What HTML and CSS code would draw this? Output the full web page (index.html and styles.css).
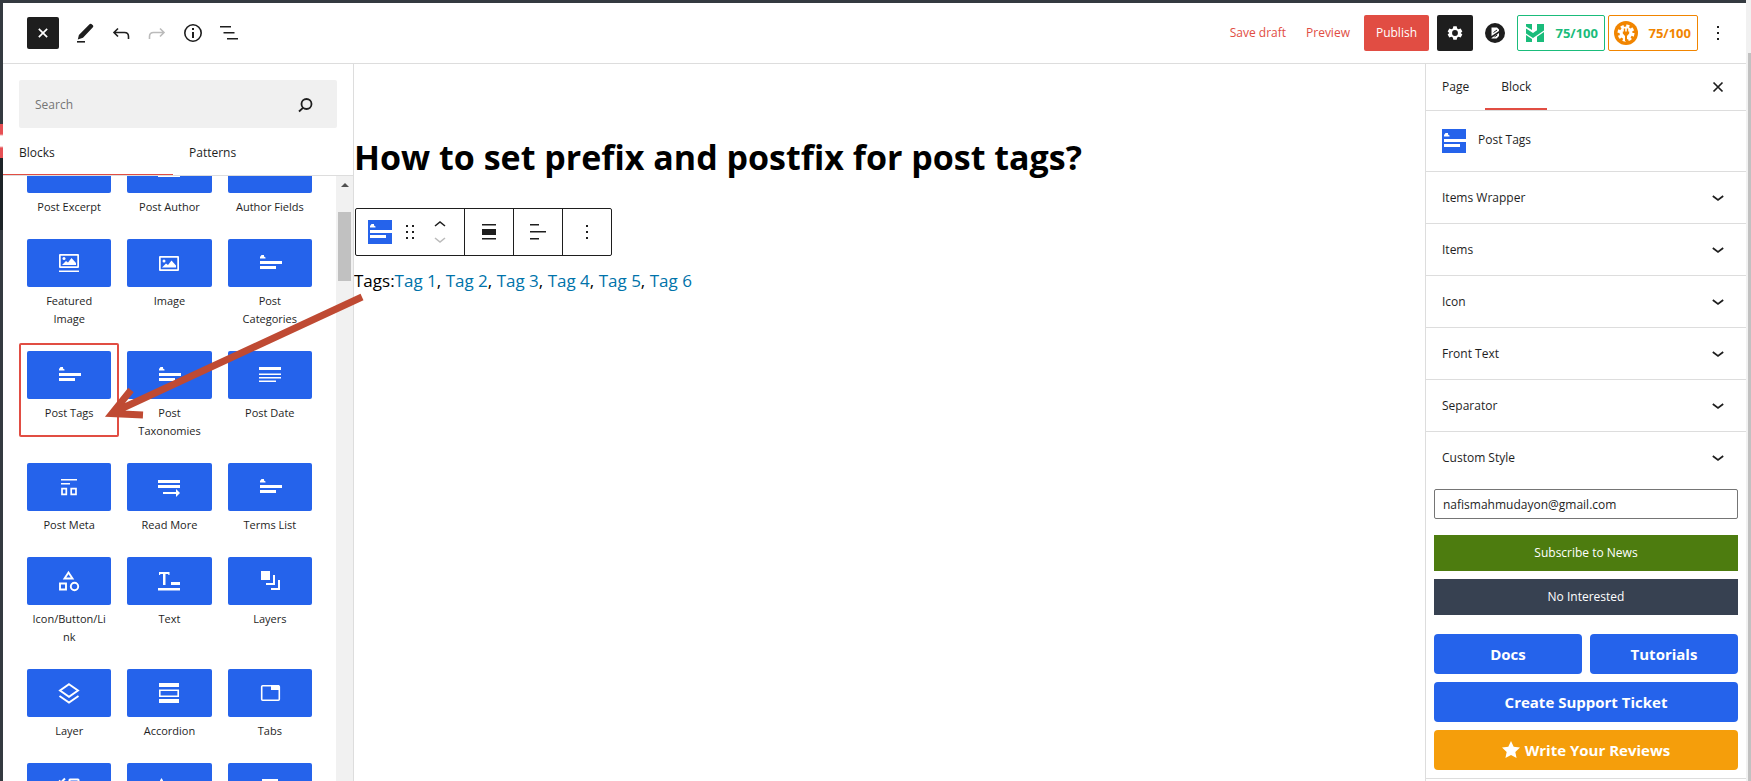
FILE: index.html
```
<!DOCTYPE html>
<html lang="en">
<head>
<meta charset="utf-8">
<title>Edit Page</title>
<link rel="stylesheet" href="styles.css">
</head>
<body>
<svg class="defs" aria-hidden="true">
  <symbol id="terms" viewBox="0 0 24 24"><path d="M2 7.500V6l1.500-2H6v1.500l1.500 1v1zM2 10h22v3H2zM2 15h16v3H2z"/></symbol>
  <symbol id="chev" viewBox="0 0 24 24"><path d="M6.800 10 12 14l5.200-4" fill="none" stroke="currentColor" stroke-width="1.700"/></symbol>
</svg>
<div class="frame">
  <div class="strip"></div>
  <div class="editor">
    <header class="topbar">
      <div class="tools">
        <button class="tool close-inserter" aria-label="Toggle block inserter"><svg viewBox="0 0 24 24"><path d="M7 7l10 10M17 7 7 17" fill="none" stroke="currentColor" stroke-width="2"/></svg></button>
        <button class="tool" aria-label="Tools"><svg viewBox="0 0 24 24"><path d="M16.500 3.200q.8-1 1.900-.2l1.500 1.300q.9.900 0 1.900L10 16.800 4.800 18.600 5.900 14z"/><path d="M4 20h8v1.600H4z"/></svg></button>
        <button class="tool" aria-label="Undo"><svg viewBox="0 0 24 24"><path d="M9 7.500 5 11.500l4 4M5 11.500h10.500q4 0 4 4v2.500" fill="none" stroke="currentColor" stroke-width="1.600"/></svg></button>
        <button class="tool" aria-label="Redo" disabled><svg viewBox="0 0 24 24"><path d="m15 7.500 4 4-4 4M19 11.500H8.500q-4 0-4 4v2.500" fill="none" stroke="currentColor" stroke-width="1.600"/></svg></button>
        <button class="tool" aria-label="Details"><svg viewBox="0 0 24 24"><circle cx="12" cy="12" r="8.200" fill="none" stroke="currentColor" stroke-width="1.600"/><path d="M11 7h2v2h-2zM11 11h2v6h-2z"/></svg></button>
        <button class="tool" aria-label="List view"><svg viewBox="0 0 24 24"><path d="M3 5h11v1.600H3zM6.500 11h11v1.600h-11zM10 17h11v1.600H10z"/></svg></button>
      </div>
      <div class="actions">
        <button class="link">Save draft</button>
        <button class="link">Preview</button>
        <button class="publish">Publish</button>
        <button class="settings" aria-label="Settings"><svg viewBox="0 0 24 24"><path fill-rule="evenodd" d="M10 4h4l.6 2.500 1.700 1 2.500-.8 2 3.400-1.900 1.900 1.900 1.900-2 3.400-2.500-.8-1.700 1L14 20h-4l-.6-2.500-1.700-1-2.500.8-2-3.400L5.100 12 3.200 10.100l2-3.400 2.500.8 1.700-1zM12 8.500a3.500 3.500 0 1 0 0 7 3.500 3.500 0 0 0 0-7z"/></svg></button>
        <button class="round" aria-label="Block settings"><svg viewBox="0 0 20 20"><circle cx="10" cy="10" r="10"/><path d="M6.500 4.500h5.500l2 2v1.500L6.500 13zM14 10v3l-2.500 2.500H6.500v-.5z" fill="#fff"/><path d="M8.500 9.500 12 7M9.500 13.800l2.700-1.800" stroke="#1e1e1e"/></svg></button>
        <div class="scores">
          <button class="score green"><svg viewBox="0 0 18 18"><path d="M0 0h6v6L0 2.500zM11 0h7v1.500L11 6.500zM0 4.500l7 4.500 11-7.500v5L7 14 0 9.500zM0 11l6 4v3H0zM11 12.800l7-4.800v10h-7z"/></svg>75/100</button>
          <button class="score orange"><svg viewBox="0 0 24 24"><circle cx="12" cy="12" r="12"/><circle cx="12" cy="12" r="6.500" fill="#fff"/><circle cx="12" cy="12" r="7" fill="none" stroke="#fff" stroke-width="3" stroke-dasharray="3.100 2.400"/><path d="M8.800 10.500h6.400v2l-2.200 2.500v5h-2v-5l-2.200-2.500zM9.800 7.500h1.400v3H9.800zM12.800 7.500h1.400v3h-1.400z"/></svg>75/100</button>
        </div>
        <button class="tool more" aria-label="Options"><svg viewBox="0 0 24 24"><path d="M11 5h2v2h-2zM11 11h2v2h-2zM11 17h2v2h-2z"/></svg></button>
      </div>
    </header>
    <div class="body">
      <aside class="inserter">
        <div class="search">
          <input type="search" aria-label="Search" placeholder="Search">
          <svg viewBox="0 0 24 24"><path d="M6 18.500 10 14.800" fill="none" stroke="currentColor" stroke-width="1.800"/><circle cx="13.500" cy="11" r="5" fill="none" stroke="currentColor" stroke-width="1.800"/></svg>
        </div>
        <div class="tabs" role="tablist">
          <button role="tab" aria-selected="true">Blocks</button>
          <button role="tab" aria-selected="false">Patterns</button>
        </div>
        <div class="list">
          <div class="grid">
            <button class="item"><span class="pic"></span><span class="label">Post Excerpt</span></button>
            <button class="item"><span class="pic"><svg viewBox="0 0 24 24"><path d="M1 17h22v3H1z"/></svg></span><span class="label">Post Author</span></button>
            <button class="item"><span class="pic"></span><span class="label">Author Fields</span></button>

            <button class="item"><span class="pic"><svg viewBox="0 0 24 24"><path fill-rule="evenodd" d="M3 3h18q1 0 1 1v12q0 1-1 1H3q-1 0-1-1V4q0-1 1-1zm.7 1.700v10.600h16.600V4.700zM5 14l4-4 2 1.500L14.500 7 19 12v2z"/><circle cx="7" cy="7.500" r="1.500"/><path d="M2 19.500h20V21H2z"/></svg></span><span class="label">Featured Image</span></button>
            <button class="item"><span class="pic"><svg viewBox="0 0 24 24"><path fill-rule="evenodd" d="M3 5h18q1 0 1 1v13q0 1-1 1H3q-1 0-1-1V6q0-1 1-1zm.7 1.700v11.600h16.600V6.700zM5 16.500l4-4 2 1.500L14.500 9.500 19 14.500v2z"/><circle cx="7" cy="10" r="1.500"/></svg></span><span class="label">Image</span></button>
            <button class="item"><span class="pic"><svg viewBox="0 0 24 24"><use href="#terms"/></svg></span><span class="label">Post Categories</span></button>

            <button class="item selected"><span class="pic"><svg viewBox="0 0 24 24"><use href="#terms"/></svg></span><span class="label">Post Tags</span></button>
            <button class="item"><span class="pic"><svg viewBox="0 0 24 24"><use href="#terms"/></svg></span><span class="label">Post Taxonomies</span></button>
            <button class="item"><span class="pic"><svg viewBox="0 0 24 24"><path d="M1 4h22v3H1zM1 10.500h22V12H1zM1 14h22v1.500H1zM1 17.500h17V19H1z"/></svg></span><span class="label">Post Date</span></button>

            <button class="item"><span class="pic"><svg viewBox="0 0 24 24"><path d="M4 4h16v1.500H4zM4 8h9v1.500H4z"/><path d="M5 13.700h4.300v5.600H5zM14.200 13.700h4.800v5.600h-4.800z" fill="none" stroke="#fff" stroke-width="1.700"/></svg></span><span class="label">Post Meta</span></button>
            <button class="item"><span class="pic"><svg viewBox="0 0 24 24"><path d="M1 5h22v3H1zM1 10h22v3H1zM6 17h13v-3l4 4-4 4v-3H6z"/></svg></span><span class="label">Read More</span></button>
            <button class="item"><span class="pic"><svg viewBox="0 0 24 24"><use href="#terms"/></svg></span><span class="label">Terms List</span></button>

            <button class="item"><span class="pic"><svg viewBox="0 0 24 24"><path d="M11.500 3.500 15.500 9.500h-8zM3 14.500h6v6H3z" fill="none" stroke="#fff" stroke-width="1.900"/><circle cx="17.500" cy="17.500" r="3.700" fill="none" stroke="#fff" stroke-width="1.900"/></svg></span><span class="label">Icon/Button/Link</span></button>
            <button class="item"><span class="pic"><svg viewBox="0 0 24 24"><path d="M2 3h10.500v3h-1.200V5H8.500v11H6V5H3.200v1H2zM14 13h9v3h-9zM1 19h22v2.500H1z"/></svg></span><span class="label">Text</span></button>
            <button class="item"><span class="pic"><svg viewBox="0 0 24 24"><path d="M3 2h9v9H3zM15 6h2v10H8v-2h7zM20 11h2v10h-9v-2h7z"/></svg></span><span class="label">Layers</span></button>

            <button class="item"><span class="pic"><svg viewBox="0 0 24 24"><path d="M12 3.200 21 9.500l-9 6.300-9-6.300zM2.500 15 12 21.500 21.500 15" fill="none" stroke="#fff" stroke-width="1.900"/></svg></span><span class="label">Layer</span></button>
            <button class="item"><span class="pic"><svg viewBox="0 0 24 24"><path d="M2 2h20v4H2zM2 18h20v4H2z"/><path d="M2.800 9.300h18.400v6H2.800z" fill="none" stroke="#fff" stroke-width="1.600"/></svg></span><span class="label">Accordion</span></button>
            <button class="item"><span class="pic"><svg viewBox="0 0 24 24"><rect x="3.700" y="4.700" width="17.600" height="14.600" rx="1" fill="none" stroke="#fff" stroke-width="1.600"/><path d="M13 4h8v5h-8z"/></svg></span><span class="label">Tabs</span></button>

            <button class="item"><span class="pic"><svg viewBox="0 0 24 24"><path d="m2 5.500 2 2L8 3.500M12.500 7V5q0-.5.500-.5h8q.5 0 .5.500v14h-9z" fill="none" stroke="#fff" stroke-width="2"/></svg></span><span class="label">Form</span></button>
            <button class="item"><span class="pic"><svg viewBox="0 0 24 24"><path d="M3 5.500 4.500 3 6 5.500V18H3z"/></svg></span><span class="label">List</span></button>
            <button class="item"><span class="pic"><svg viewBox="0 0 24 24"><path d="M4 4h16v2H4zM4 9h16v2H4z"/></svg></span><span class="label">Table</span></button>
          </div>
          <div class="scrollbar"><i class="up"></i><i class="thumb"></i></div>
        </div>
        <svg class="pointer" viewBox="0 0 270 140" aria-hidden="true"><path d="M262 13 12 129M31 106 12 129.500 43 131" fill="none" stroke="#bf4a33" stroke-width="7" stroke-miterlimit="10"/></svg>
      </aside>
      <main class="canvas">
        <h1>How to set prefix and postfix for post tags?</h1>
        <div class="toolbar" role="toolbar" aria-label="Block tools">
          <div class="group wide">
            <button aria-label="Post Tags"><svg class="brand" viewBox="0 0 24 24"><use href="#terms"/></svg></button>
            <button class="drag" aria-label="Drag"><svg viewBox="0 0 24 24"><path d="M8 5h2v2H8zM14 5h2v2h-2zM8 11h2v2H8zM14 11h2v2h-2zM8 17h2v2H8zM14 17h2v2h-2z"/></svg></button>
            <span class="movers">
              <button aria-label="Move up"><svg viewBox="0 0 12 8"><path d="m1 6 5-4 5 4" fill="none" stroke="currentColor" stroke-width="1.600"/></svg></button>
              <button aria-label="Move down" disabled><svg viewBox="0 0 12 8"><path d="m1 2 5 4 5-4" fill="none" stroke="currentColor" stroke-width="1.600"/></svg></button>
            </span>
          </div>
          <div class="group"><button aria-label="Align"><svg viewBox="0 0 24 24"><path d="M5 4h14v1.600H5zM5 9h14v6H5zM5 18h14v1.600H5z"/></svg></button></div>
          <div class="group"><button aria-label="Align text"><svg viewBox="0 0 24 24"><path d="M4 4h9v1.600H4zM4 11h16v1.600H4zM4 18h9v1.600H4z"/></svg></button></div>
          <div class="group"><button aria-label="Options"><svg viewBox="0 0 24 24"><path d="M11 5h2v2h-2zM11 11h2v2h-2zM11 17h2v2h-2z"/></svg></button></div>
        </div>
        <p class="tags">Tags:<a href="#">Tag 1</a>, <a href="#">Tag 2</a>, <a href="#">Tag 3</a>, <a href="#">Tag 4</a>, <a href="#">Tag 5</a>, <a href="#">Tag 6</a></p>
      </main>
      <aside class="sidebar">
        <div class="side-tabs">
          <button>Page</button>
          <button class="active">Block</button>
          <button class="side-close" aria-label="Close settings"><svg viewBox="0 0 24 24"><path d="m7.500 7.500 9 9M16.500 7.500l-9 9" fill="none" stroke="currentColor" stroke-width="1.700"/></svg></button>
        </div>
        <div class="card"><svg class="brand" viewBox="0 0 24 24"><use href="#terms"/></svg><h2>Post Tags</h2></div>
        <button class="panel">Items Wrapper<svg viewBox="0 0 24 24"><use href="#chev"/></svg></button>
        <button class="panel">Items<svg viewBox="0 0 24 24"><use href="#chev"/></svg></button>
        <button class="panel">Icon<svg viewBox="0 0 24 24"><use href="#chev"/></svg></button>
        <button class="panel">Front Text<svg viewBox="0 0 24 24"><use href="#chev"/></svg></button>
        <button class="panel">Separator<svg viewBox="0 0 24 24"><use href="#chev"/></svg></button>
        <button class="panel">Custom Style<svg viewBox="0 0 24 24"><use href="#chev"/></svg></button>
        <form class="news">
          <input type="email" aria-label="Email" value="nafismahmudayon@gmail.com">
          <button type="button" class="subscribe">Subscribe to News</button>
          <button type="button" class="decline">No Interested</button>
        </form>
        <nav class="help">
          <a href="#">Docs</a>
          <a href="#">Tutorials</a>
          <a href="#" class="full">Create Support Ticket</a>
          <a href="#" class="full review"><svg viewBox="0 0 20 20"><path d="m10 0 3 6.500 7 .8-5.200 4.800L16.200 19 10 15.600 3.800 19l1.400-6.900L0 7.300l7-.8z"/></svg>Write Your Reviews</a>
        </nav>
      </aside>
    </div>
  </div>
  <div class="page-scroll"></div>
</div>
</body>
</html>
```
FILE: styles.css
```
* { box-sizing: border-box; }
body {
  margin: 0;
  font-family: "Open Sans", "Noto Sans", sans-serif;
  font-size: 12px;
  line-height: 18px;
  color: #1e1e1e;
  background: #fff;
}
button, input { font: inherit; color: inherit; }
button { border: 0; padding: 0; margin: 0; background: none; cursor: pointer; }
svg { display: block; fill: currentColor; flex: none; }
a { text-decoration: none; }
.defs { display: none; }

.frame {
  display: grid;
  grid-template-columns: 3px 1fr 5px;
  height: 100vh;
  overflow: hidden;
}
.strip {
  background: linear-gradient(#343a40 124px, #e65054 124px 134px, #fff 136px 146px, #e65054 148px 158px, #1d2327 158px 230px, #343a40 230px);
}
.page-scroll {
  background: linear-gradient(#f1f1f1 53px, transparent 53px), linear-gradient(90deg, #f1f1f1 2px, #c1c1c1 2px);
}
.editor {
  display: flex;
  flex-direction: column;
  min-width: 0;
  min-height: 0;
  border-top: 3px solid #343a40;
}

.topbar {
  display: flex;
  justify-content: space-between;
  align-items: center;
  height: 61px;
  flex: none;
  padding: 0 16px 0 24px;
  border-bottom: 1px solid #ddd;
}
.tools { display: flex; gap: 4px; align-items: center; }
.tool { width: 32px; height: 32px; display: grid; place-items: center; }
.tool svg { width: 24px; height: 24px; }
.tool:disabled { color: #bbb; }
.close-inserter { background: #1e1e1e; color: #fff; border-radius: 2px; margin-right: 6px; }
.close-inserter svg { width: 20px; height: 20px; }
.actions { display: flex; align-items: center; gap: 8px; }
.link { color: #e14d43; padding: 0 6px; }
.publish { background: #e14d43; color: #fff; height: 36px; padding: 0 12px; border-radius: 2px; font-weight: 500; }
.settings { width: 36px; height: 36px; background: #1e1e1e; color: #fff; border-radius: 2px; display: grid; place-items: center; }
.settings svg { width: 20px; height: 20px; }
.round { padding: 0 4px; }
.round svg { width: 20px; height: 20px; }
.scores { display: flex; gap: 3px; }
.score {
  display: flex;
  align-items: center;
  justify-content: space-between;
  height: 36px;
  width: 88px;
  padding: 0 6px 0 8px;
  border: 1px solid;
  border-radius: 2px;
  font-size: 13px;
  font-weight: 700;
}
.green { color: #1abc7b; }
.green svg { width: 18px; height: 18px; }
.orange { color: #f18500; width: 90px; padding-left: 5px; }
.orange svg { width: 24px; height: 24px; }
.more { width: 24px; }

.body { display: flex; flex: 1; min-height: 0; }

.inserter {
  position: relative;
  width: 351px;
  flex: none;
  display: flex;
  flex-direction: column;
  border-right: 1px solid #ddd;
}
.search {
  display: flex;
  align-items: center;
  height: 48px;
  flex: none;
  margin: 16px 16px 0;
  padding: 2px 20px 0 16px;
  background: #f0f0f0;
  border-radius: 2px;
}
.search input { flex: 1; min-width: 0; border: 0; padding: 0; background: none; outline: 0; }
.search input::placeholder { color: #757575; }
.search svg { width: 24px; height: 24px; }
.tabs { display: grid; grid-template-columns: 170px 1fr; height: 48px; flex: none; border-bottom: 1px solid #ddd; }
.tabs button { text-align: left; padding: 2px 0 0 16px; font-weight: 500; }
.tabs [aria-selected="true"] { box-shadow: inset 0 -1px #e14d43; }
.list { display: flex; flex: 1; min-height: 0; overflow: hidden; }
.grid {
  flex: 1;
  display: grid;
  grid-template-columns: repeat(3, 1fr);
  grid-auto-rows: max-content;
  align-content: start;
  align-items: start;
  margin-top: -39px;
  padding: 0 16px;
}
.item {
  display: flex;
  flex-direction: column;
  gap: 5px;
  padding: 8px 8px 15px;
  border-radius: 2px;
  font-size: 11px;
}
.selected { box-shadow: inset 0 0 0 2px #e14d43; }
.pic { width: 100%; height: 48px; display: grid; place-items: center; background: #2563eb; color: #fff; border-radius: 2px; }
.pic svg { width: 24px; height: 24px; }
.label { width: 100%; text-align: center; overflow-wrap: anywhere; padding: 0 3px; }
.scrollbar { width: 17px; flex: none; background: #f1f1f1; display: flex; flex-direction: column; align-items: center; }
.up { margin: 7px 0 25px; border: 4px solid transparent; border-top: 0; border-bottom-color: #505050; }
.thumb { width: 13px; height: 69px; background: #c1c1c1; }
.pointer { position: absolute; left: 97px; top: 220px; width: 270px; height: 140px; z-index: 2; }

.canvas { flex: 1; min-width: 0; color: #000; padding-top: 69px; }
h1 { margin: 0; font-size: 34px; line-height: 48px; font-weight: 700; }
.toolbar {
  display: inline-flex;
  margin: 27px 0 0 1px;
  height: 48px;
  border: 1px solid #1e1e1e;
  border-radius: 2px;
  color: #1e1e1e;
}
.group { display: flex; align-items: center; justify-content: center; width: 49px; }
.group + .group { border-left: 1px solid #1e1e1e; }
.group svg { width: 24px; height: 24px; }
.wide { width: 108px; justify-content: flex-start; padding-left: 12px; }
.brand { width: 24px; height: 24px; background: #2563eb; color: #fff; }
.drag { margin: 0 6px; }
.movers { display: grid; gap: 8px; margin-left: 6px; }
.movers svg { width: 12px; height: 8px; }
.movers button:disabled { color: #bbb; }
.tags { margin: 12px 0 0; font-size: 17px; line-height: 26px; }
.tags a { color: #0073aa; }

.sidebar { width: 321px; flex: none; border-left: 1px solid #ddd; }
.side-tabs { display: flex; height: 47px; border-bottom: 1px solid #ddd; }
.side-tabs button { padding: 0 16px; }
.side-tabs .active { box-shadow: inset 0 -2px #e14d43; }
.side-tabs .side-close { margin-left: auto; }
.side-close svg { width: 24px; height: 24px; }
.card { display: flex; gap: 12px; padding: 18px 16px; height: 60px; }
.card h2 { margin: 2px 0; font-size: 12px; font-weight: 400; }
.panel {
  display: flex;
  align-items: center;
  justify-content: space-between;
  width: 100%;
  height: 52px;
  padding: 0 16px;
  border-top: 1px solid #ddd;
}
.panel svg { width: 24px; height: 24px; }
.news { display: grid; gap: 8px; padding: 6px 8px 0; }
.news input { width: 100%; height: 30px; border: 1px solid #757575; border-radius: 2px; padding: 0 8px; margin-bottom: 8px; }
.news button { height: 36px; color: #fff; }
.subscribe { background: #4d7c0f; }
.decline { background: #374151; }
.help { display: grid; grid-template-columns: 1fr 1fr; gap: 8px; padding: 19px 8px 8px; border-bottom: 1px solid #ddd; }
.help a { display: flex; align-items: center; justify-content: center; gap: 5px; height: 40px; background: #2563eb; border-radius: 4px; color: #fff; font-size: 15px; font-weight: 700; }
.help .full { grid-column: 1 / -1; }
.help .review { background: #f59e0b; }
.review svg { width: 18px; height: 18px; }
```
